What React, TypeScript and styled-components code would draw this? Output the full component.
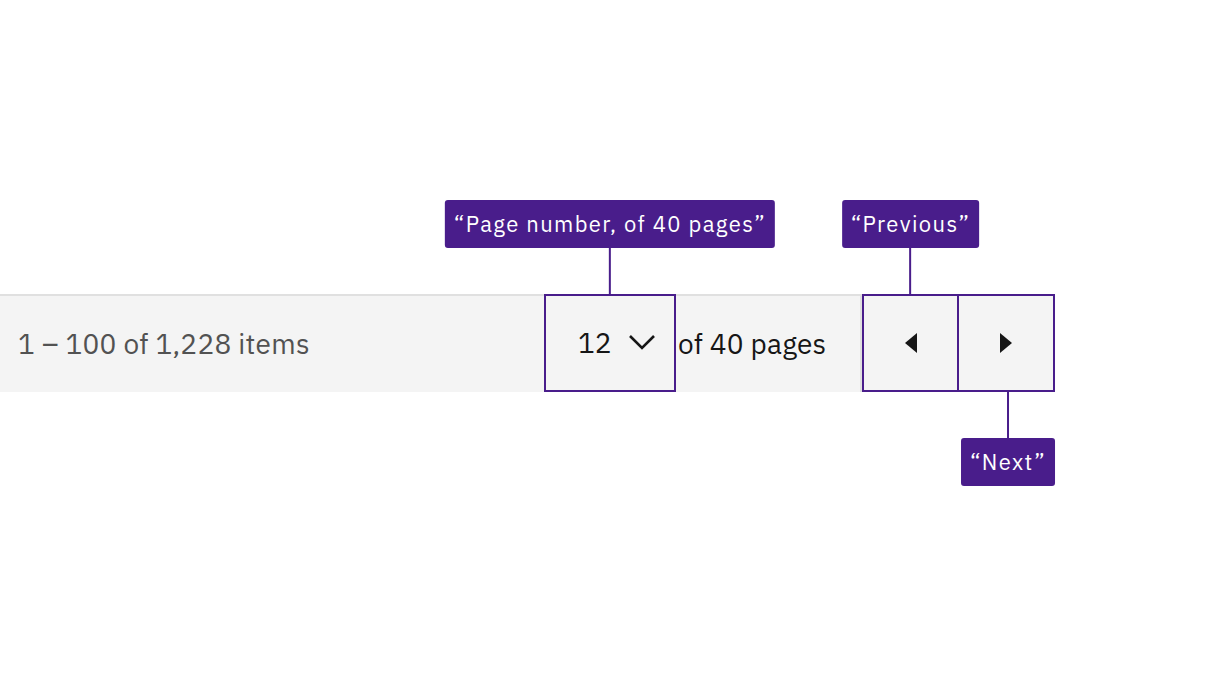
import React from "react";
import styled, { createGlobalStyle } from "styled-components";

const Global = createGlobalStyle`
  html, body { margin: 0; padding: 0; background: #ffffff; }
  body { font-family: "IBM Plex Sans", "Noto Sans", Inter, "Liberation Sans", sans-serif; }
`;

const PURPLE = "#491d8b";

const Page = styled.div`
  width: 1216px;
  height: 684px;
  padding-top: 294px;
  box-sizing: border-box;
  background: #ffffff;
`;

const Bar = styled.div`
  display: flex;
  align-items: stretch;
  width: 1055px;
  height: 98px;
`;

const Left = styled.div`
  flex: 1;
  display: flex;
  align-items: center;
  padding-left: 18px;
  padding-bottom: 2px;
  background: #f4f4f4;
  border-top: 2px solid #e0e0e0;
  font-size: 28px;
  color: #525252;
  letter-spacing: 0.25px;
`;

const Select = styled.div`
  position: relative;
  width: 132px;
  box-sizing: border-box;
  display: flex;
  align-items: center;
  padding-left: 32px;
  padding-bottom: 2px;
  gap: 16px;
  background: #f4f4f4;
  border: 2px solid ${PURPLE};
  font-size: 28px;
  color: #161616;
`;

const PagesText = styled.div`
  width: 186px;
  box-sizing: border-box;
  display: flex;
  align-items: center;
  padding-left: 2px;
  padding-bottom: 2px;
  background: #f4f4f4;
  border-top: 2px solid #e0e0e0;
  border-right: 2px solid #e0e0e0;
  font-size: 28px;
  color: #161616;
  letter-spacing: 0.2px;
`;

const NavButton = styled.div<{ $width: number; $overlap?: boolean }>`
  position: relative;
  width: ${(p) => p.$width}px;
  box-sizing: border-box;
  margin-left: ${(p) => (p.$overlap ? "-2px" : "0")};
  display: flex;
  align-items: center;
  justify-content: center;
  background: #f4f4f4;
  border: 2px solid ${PURPLE};
`;

const Callout = styled.div<{ $below?: boolean; $shift?: number }>`
  position: absolute;
  left: calc(50% + ${(p) => p.$shift ?? 0}px);
  transform: translateX(-50%);
  display: flex;
  flex-direction: ${(p) => (p.$below ? "column-reverse" : "column")};
  align-items: center;
  ${(p) => (p.$below ? "top: calc(100% + 2px);" : "bottom: calc(100% + 2px);")}
`;

const Label = styled.div`
  height: 48px;
  line-height: 48px;
  padding: 0 9px;
  background: ${PURPLE};
  color: #ffffff;
  border-radius: 3px;
  font-size: 22px;
  white-space: nowrap;
  letter-spacing: 1.4px;
`;

const Connector = styled.div`
  width: 2px;
  height: 46px;
  background: ${PURPLE};
`;

const Chevron = () => (
  <svg width="28" height="16" viewBox="0 0 28 16">
    <polyline points="2,2 14,14 26,2" fill="none" stroke="#161616" strokeWidth="2.6" />
  </svg>
);

const Caret = ({ dir }: { dir: "left" | "right" }) => (
  <svg width="12" height="20" viewBox="0 0 12 20">
    {dir === "left" ? <path d="M12 0 L0 10 L12 20 Z" fill="#161616" /> : <path d="M0 0 L12 10 L0 20 Z" fill="#161616" />}
  </svg>
);

export default function App() {
  return (
    <>
      <Global />
      <Page>
        <Bar>
          <Left>1 – 100 of 1,228 items</Left>
          <Select>
            <Callout>
              <Label>“Page number, of 40 pages”</Label>
              <Connector />
            </Callout>
            <span>12</span>
            <Chevron />
          </Select>
          <PagesText>of 40 pages</PagesText>
          <NavButton $width={97}>
            <Callout>
              <Label>“Previous”</Label>
              <Connector />
            </Callout>
            <Caret dir="left" />
          </NavButton>
          <NavButton $width={98} $overlap>
            <Callout $below $shift={2}>
              <Label>“Next”</Label>
              <Connector />
            </Callout>
            <Caret dir="right" />
          </NavButton>
        </Bar>
      </Page>
    </>
  );
}
